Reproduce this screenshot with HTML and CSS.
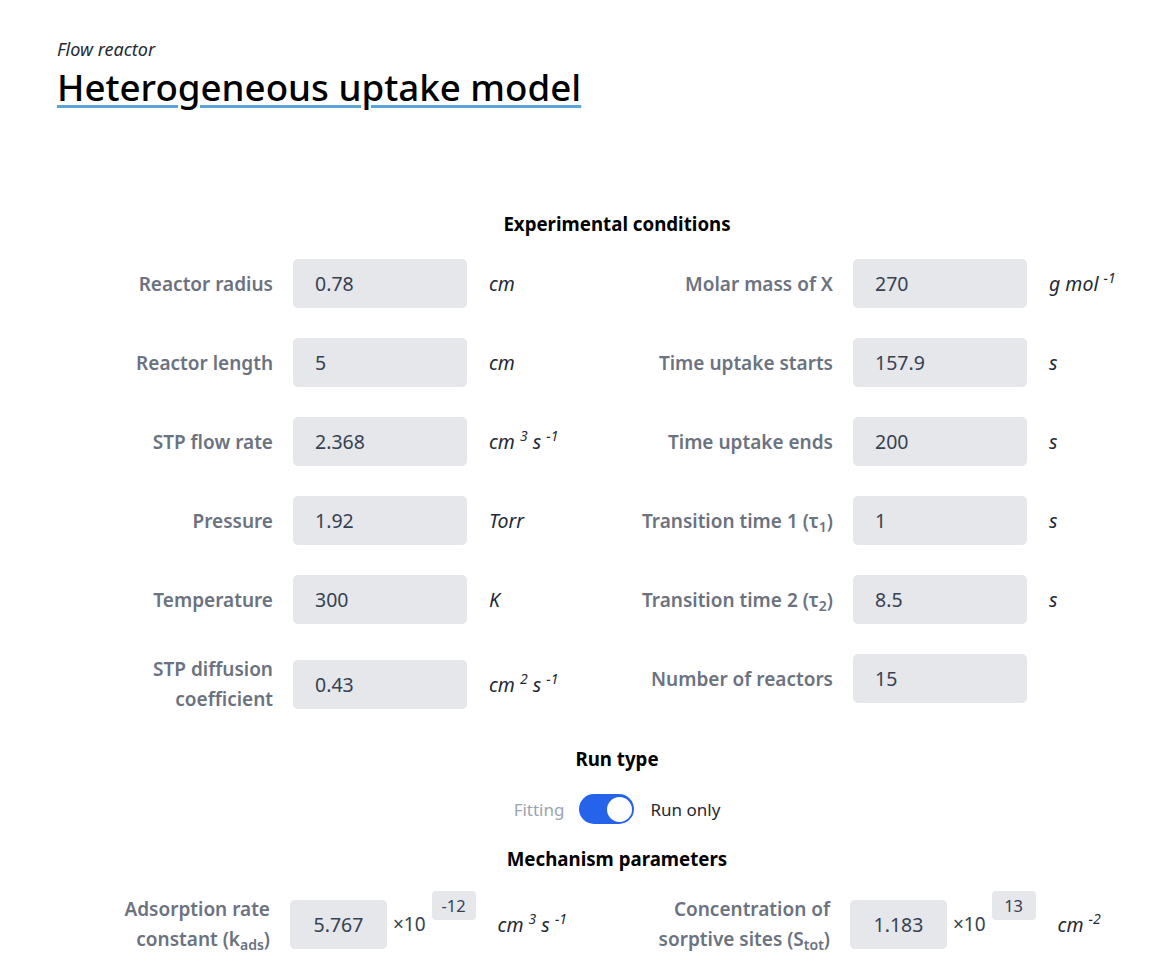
FILE: index.html
```html
<!DOCTYPE html>
<html lang="en">
<head>
<meta charset="utf-8">
<title>Heterogeneous uptake model</title>
<link rel="stylesheet" href="styles.css">
</head>
<body>
<header class="page-header">
  <p class="kicker">Flow reactor</p>
  <h1 class="title">Heterogeneous uptake model</h1>
</header>
<main class="content">
  <h2 class="section-title">Experimental conditions</h2>
  <div class="conditions">
    <div class="half">
      <div class="field"><label class="field-label">Reactor radius</label><input class="field-input" type="text" value="0.78"><span class="unit">cm</span></div>
      <div class="field"><label class="field-label">Reactor length</label><input class="field-input" type="text" value="5"><span class="unit">cm</span></div>
      <div class="field"><label class="field-label">STP flow rate</label><input class="field-input" type="text" value="2.368"><span class="unit">cm <sup>3</sup> s <sup>−1</sup></span></div>
      <div class="field"><label class="field-label">Pressure</label><input class="field-input" type="text" value="1.92"><span class="unit">Torr</span></div>
      <div class="field"><label class="field-label">Temperature</label><input class="field-input" type="text" value="300"><span class="unit">K</span></div>
      <div class="field"><label class="field-label">STP diffusion coefficient</label><input class="field-input" type="text" value="0.43"><span class="unit">cm <sup>2</sup> s <sup>−1</sup></span></div>
    </div>
    <div class="half">
      <div class="field"><label class="field-label">Molar mass of X</label><input class="field-input" type="text" value="270"><span class="unit">g mol <sup>−1</sup></span></div>
      <div class="field"><label class="field-label">Time uptake starts</label><input class="field-input" type="text" value="157.9"><span class="unit">s</span></div>
      <div class="field"><label class="field-label">Time uptake ends</label><input class="field-input" type="text" value="200"><span class="unit">s</span></div>
      <div class="field"><label class="field-label">Transition time 1 (τ<sub>1</sub>)</label><input class="field-input" type="text" value="1"><span class="unit">s</span></div>
      <div class="field"><label class="field-label">Transition time 2 (τ<sub>2</sub>)</label><input class="field-input" type="text" value="8.5"><span class="unit">s</span></div>
      <div class="field"><label class="field-label">Number of reactors</label><input class="field-input" type="text" value="15"><span class="unit"></span></div>
    </div>
  </div>

  <h2 class="section-title run-title">Run type</h2>
  <div class="run-toggle">
    <span class="run-option muted">Fitting</span>
    <span class="switch" role="switch" aria-checked="true"><span class="knob"></span></span>
    <span class="run-option">Run only</span>
  </div>

  <h2 class="section-title mech-title">Mechanism parameters</h2>
  <div class="mechanism">
    <div class="half">
      <div class="field sci"><label class="field-label narrow">Adsorption rate constant (k<sub>ads</sub>)</label><input class="field-input mantissa" type="text" value="5.767"><span class="times">×10</span><input class="exponent" type="text" value="-12"><span class="unit">cm <sup>3</sup> s <sup>−1</sup></span></div>
    </div>
    <div class="half">
      <div class="field sci"><label class="field-label narrow">Concentration of sorptive sites (S<sub>tot</sub>)</label><input class="field-input mantissa" type="text" value="1.183"><span class="times">×10</span><input class="exponent" type="text" value="13"><span class="unit">cm <sup>−2</sup></span></div>
    </div>
  </div>
</main>
</body>
</html>
```

FILE: styles.css
```css
html, body {
  margin: 0;
  padding: 0;
  overflow-x: hidden;
  background: #ffffff;
  font-family: "Noto Sans", "Open Sans", sans-serif;
  color: #1f2937;
}

.page-header {
  padding: 36px 0 0 57px;
}

.kicker {
  margin: 0;
  font-size: 18px;
  line-height: 27px;
  font-style: italic;
  color: #1f2937;
}

.title {
  margin: 3px 0 0;
  font-size: 36.7px;
  line-height: 43px;
  font-weight: 500;
  color: #000000;
  display: inline-block;
  text-decoration: underline;
  text-decoration-color: #5aa5d6;
  text-decoration-thickness: 3px;
  text-underline-offset: 4px;
  text-decoration-skip-ink: auto;
}

.content {
  width: 1120px;
  margin-left: 57px;
  padding-top: 101px;
  display: flex;
  flex-direction: column;
  align-items: stretch;
}

.section-title {
  margin: 0;
  font-size: 18.7px;
  line-height: 28px;
  font-weight: 700;
  color: #000000;
  text-align: center;
}

.conditions,
.mechanism {
  display: flex;
  margin-top: 21px;
}

.half {
  width: 560px;
  display: flex;
  flex-direction: column;
  gap: 30px;
}

.field {
  display: flex;
  align-items: center;
  min-height: 49px;
}

.field-label {
  width: 216px;
  flex: none;
  text-align: right;
  font-size: 19px;
  line-height: 30px;
  font-weight: 600;
  color: #6b7280;
  margin-right: 20px;
}

.field-label.narrow {
  width: 213px;
}

sub {
  font-size: 14px;
  vertical-align: -4px;
  line-height: 0;
}

sup {
  font-size: 14px;
  vertical-align: 8px;
  line-height: 0;
}

.field-input {
  width: 174px;
  height: 49px;
  box-sizing: border-box;
  border: none;
  border-radius: 5px;
  background: #e5e7eb;
  padding: 0 0 0 22px;
  font-family: "Noto Sans", "Open Sans", sans-serif;
  font-size: 19.5px;
  color: #374151;
  outline: none;
  flex: none;
}

.unit {
  margin-left: 22px;
  font-size: 19.5px;
  font-style: italic;
  color: #1f2937;
  white-space: nowrap;
}

.run-title {
  margin-top: 31px;
}

.run-toggle {
  margin-top: 21px;
  display: flex;
  justify-content: center;
  align-items: center;
  height: 30px;
  font-size: 17px;
}

.run-option {
  color: #1f2937;
}

.run-option.muted {
  color: #9ca3af;
}

.switch {
  width: 55px;
  height: 30px;
  margin: 0 16px 0 15px;
  border-radius: 15px;
  background: #2563eb;
  display: flex;
  align-items: center;
  justify-content: flex-end;
  padding: 0 2px;
  box-sizing: border-box;
}

.knob {
  width: 25px;
  height: 25px;
  border-radius: 50%;
  background: #ffffff;
}

.mech-title {
  margin-top: 21px;
}

.conditions + .run-title {
  margin-top: 31px;
}

.mechanism {
  margin-top: 18px;
}

.field-input.mantissa {
  width: 97px;
  padding: 0;
  text-align: center;
}

.times {
  margin-left: 6px;
  font-size: 19px;
  color: #374151;
}

.exponent {
  width: 44px;
  height: 29px;
  box-sizing: border-box;
  margin: 0 0 37px 6px;
  border: none;
  border-radius: 4px;
  background: #e5e7eb;
  padding: 0;
  text-align: center;
  font-family: "Noto Sans", "Open Sans", sans-serif;
  font-size: 16.5px;
  color: #374151;
  outline: none;
  flex: none;
}
```
